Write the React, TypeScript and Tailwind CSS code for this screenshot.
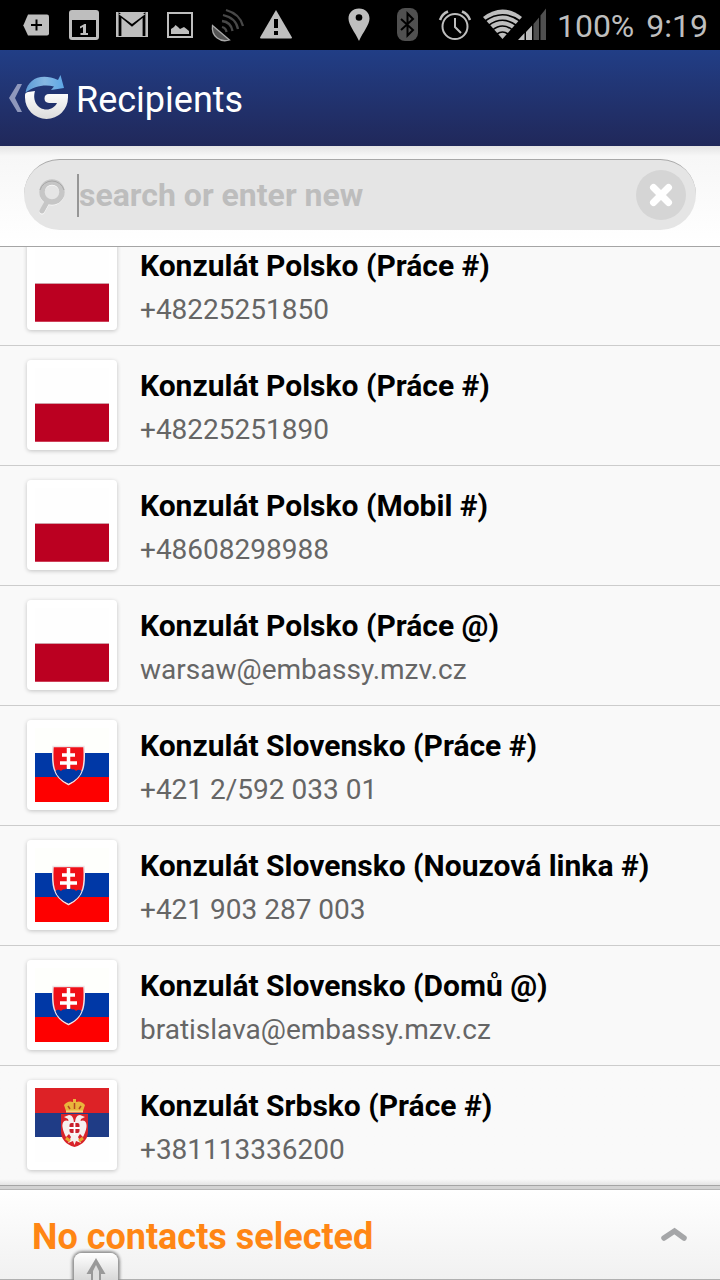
import React from "react";

type Flag = "pl" | "sk" | "rs";

interface Contact {
  name: string;
  detail: string;
  flag: Flag;
}

const contacts: Contact[] = [
  { name: "Konzulát Polsko (Práce #)", detail: "+48225251850", flag: "pl" },
  { name: "Konzulát Polsko (Práce #)", detail: "+48225251890", flag: "pl" },
  { name: "Konzulát Polsko (Mobil #)", detail: "+48608298988", flag: "pl" },
  { name: "Konzulát Polsko (Práce @)", detail: "warsaw@embassy.mzv.cz", flag: "pl" },
  { name: "Konzulát Slovensko (Práce #)", detail: "+421 2/592 033 01", flag: "sk" },
  { name: "Konzulát Slovensko (Nouzová linka #)", detail: "+421 903 287 003", flag: "sk" },
  { name: "Konzulát Slovensko (Domů @)", detail: "bratislava@embassy.mzv.cz", flag: "sk" },
  { name: "Konzulát Srbsko (Práce #)", detail: "+381113336200", flag: "rs" },
];

function Cell({ children }: { children: React.ReactNode }) {
  return <span className="flex w-12 shrink-0 justify-center">{children}</span>;
}

function StatusBar() {
  return (
    <div className="flex h-[50px] shrink-0 items-center justify-between bg-black pl-3 pr-3 text-[#bebebe]">
      <div className="flex items-center">
        <Cell>
          <svg width="48" height="50" viewBox="0 0 48 50">
            <path d="M16 14.500H35Q37 14.500 37 16.500V33.500Q37 35.500 35 35.500H16L11.300 25.500Z" fill="currentColor" />
            <path d="M24.500 19.500V30.500M19 25H30" stroke="#000" strokeWidth="2" />
          </svg>
        </Cell>
        <Cell>
          <svg width="48" height="50" viewBox="0 0 48 50">
            <rect x="9" y="10" width="30" height="30" rx="3" fill="currentColor" />
            <rect x="12" y="20" width="24" height="17" fill="#000" />
            <path d="M20 26.500L24.500 24H26V33H28V35H20.500V33H23V27L20 28.500Z" fill="currentColor" />
          </svg>
        </Cell>
        <Cell>
          <svg width="48" height="50" viewBox="0 0 48 50">
            <rect x="8" y="12" width="32" height="25" fill="currentColor" />
            <path d="M12 36V15L24 25L36 15V36" fill="none" stroke="#000" strokeWidth="2.800" />
            <path d="M10.500 14H37.500L24 24Z" fill="currentColor" />
          </svg>
        </Cell>
        <Cell>
          <svg width="48" height="50" viewBox="0 0 48 50">
            <rect x="12" y="13" width="24" height="24" fill="none" stroke="currentColor" strokeWidth="2" />
            <path d="M15 34V29L18 27L19.500 25L22 27L24 29L28 27L30 28.500L33 31V34Z" fill="currentColor" />
          </svg>
        </Cell>
        <Cell>
          <svg width="48" height="50" viewBox="0 0 48 50" fill="none">
            <path d="M8.500 25.500C7 36 16 43 25.500 40Z" fill="#555" stroke="#aaa" strokeWidth="1.300" />
            <path d="M18 27Q22 28 22.500 32M18 21Q27 22 28.500 31M19 15Q32 18 34 29M22 10Q36 14 39 26" stroke="#484848" strokeWidth="2.300" />
          </svg>
        </Cell>
        <Cell>
          <svg width="48" height="50" viewBox="0 0 48 50">
            <path d="M24 10L40 37.500Q40 38.500 39 38.500H9Q8 38.500 8 37.500Z" fill="currentColor" />
            <path d="M24 19V28M24 31V35" stroke="#000" strokeWidth="4" />
          </svg>
        </Cell>
      </div>
      <div className="flex items-center">
        <Cell>
          <svg width="48" height="50" viewBox="0 0 48 50">
            <path d="M24 8.500C17.500 8.500 13.500 13 13.500 18.500C13.500 25 20 32 24 41C28 32 34.500 25 34.500 18.500C34.500 13 30.500 8.500 24 8.500Z" fill="currentColor" />
            <circle cx="24" cy="17.500" r="3.300" fill="#000" />
          </svg>
        </Cell>
        <Cell>
          <svg width="48" height="50" viewBox="0 0 48 50">
            <rect x="14" y="8" width="21" height="33" rx="8" fill="#505050" />
            <path d="M18 19L30 30L24.500 35.500V13.500L30 19L18 30" fill="none" stroke="#000" strokeWidth="2" />
          </svg>
        </Cell>
        <Cell>
          <svg width="48" height="50" viewBox="0 0 48 50" fill="none" stroke="currentColor">
            <circle cx="24" cy="26.500" r="12.500" strokeWidth="2" />
            <path d="M24 18V27L30 33" strokeWidth="2" />
            <path d="M9 20Q11 14 17 11.500M39 20Q37 14 31 11.500" strokeWidth="2.500" />
          </svg>
        </Cell>
        <span className="mr-[10px] flex w-[68px] shrink-0">
          <svg width="68" height="50" viewBox="0 0 68 50">
            <path d="M4 17Q23.500 2 43 17L23.500 39Z" fill="currentColor" />
            <path d="M6 21Q23.500 8.500 41 21M9.500 25.500Q23.500 15 37.500 25.500M13.500 30Q23.500 22 33.500 30M18 34Q23.500 30 29 34" stroke="#000" strokeWidth="1.600" fill="none" />
            <path d="M39 40L45.500 33V40ZM47 32L53 25.500V40H47Z" fill="currentColor" />
            <path d="M54.500 24L60 17.500V40H54.500ZM61.500 15.500L67 8.500V40H61.500Z" fill="#505050" />
          </svg>
        </span>
        <span className="flex gap-3 whitespace-nowrap pt-[2px] text-[32px] leading-[48px]">
          <span>100%</span>
          <span>9:19</span>
        </span>
      </div>
    </div>
  );
}

function Header() {
  return (
    <header className="flex h-24 shrink-0 items-center bg-gradient-to-b from-[#213e86] to-[#20285a] pl-2 text-white">
      <a href="#back" aria-label="Back" className="flex">
        <svg width="64" height="96" viewBox="8 50 64 96">
          <defs>
            <linearGradient id="g-body" x1="0" y1="0" x2="0" y2="1">
              <stop offset="0" stopColor="#ffffff" />
              <stop offset="1" stopColor="#dcdcdc" />
            </linearGradient>
            <linearGradient id="g-arrow" x1="0" y1="0" x2="1" y2="0">
              <stop offset="0" stopColor="#5c9bd6" />
              <stop offset="0.500" stopColor="#86b7e2" />
              <stop offset="1" stopColor="#5da7e6" />
            </linearGradient>
          </defs>
          <path d="M17.500 84H22L15 98L22 112H17.500L9 98Z" fill="#8f98bc" />
          <path d="M25 95Q25 92.500 28 92L35 91C32 101 38 109.500 46.500 109.500C51 109.500 55 107 57 103H49Q44.500 102.500 44.500 98.500Q44.500 94 49 94H68V97.500A21.500 21.500 0 0 1 25 97.500Z" fill="url(#g-body)" />
          <path d="M25.500 92.500C28 78 42 72.500 58 80L60.500 75L64 88L51 90L54 86.500C45 84 34 86 25.500 92.500Z" fill="url(#g-arrow)" />
        </svg>
      </a>
      <h1 className="ml-1 pt-1 text-[36px] leading-[48px]">Recipients</h1>
    </header>
  );
}

function SearchBar() {
  return (
    <div className="h-[101px] shrink-0 border-b border-[#a5a5a5] bg-gradient-to-b from-[#e4e4e4] via-[#f7f7f7] via-10% to-white px-6 pt-[13px]">
      <div className="flex h-[71px] items-center rounded-full border-t border-[#a8a8a8] bg-[#e5e5e5] pl-[14px] pr-[10px]">
        <svg width="28" height="40" viewBox="0 0 28 40" className="shrink-0" fill="none">
          <path d="M9 28L4 37" stroke="#fafafa" strokeWidth="5" strokeLinecap="round" />
          <circle cx="14" cy="18" r="10" stroke="#fafafa" strokeWidth="5" />
          <path d="M9 27L4 36" stroke="#c6c6c6" strokeWidth="5" strokeLinecap="round" />
          <circle cx="14" cy="17" r="10" stroke="#c6c6c6" strokeWidth="5.500" />
          <path d="M2 15A12.500 12.500 0 0 1 26 15" stroke="#a8a8a8" strokeWidth="1" />
        </svg>
        <span className="ml-[11px] h-[43px] w-[2px] shrink-0 bg-[#969696]" />
        <input
          type="text"
          aria-label="Search recipients"
          placeholder="search or enter new"
          className="h-14 min-w-0 flex-1 bg-transparent text-[32px] font-bold text-black outline-none placeholder:text-[#bdbdbd]"
        />
        <button type="button" aria-label="Clear search" className="flex size-[50px] shrink-0 items-center justify-center rounded-full bg-[#d5d5d5]">
          <svg width="24" height="24" viewBox="0 0 24 24">
            <path d="M4.500 4.500L19.500 19.500M19.500 4.500L4.500 19.500" stroke="#fff" strokeWidth="7" strokeLinecap="round" />
          </svg>
        </button>
      </div>
    </div>
  );
}

function FlagPicture({ flag }: { flag: Flag }) {
  if (flag === "pl") {
    return (
      <svg width="74" height="74" viewBox="0 0 74 74">
        <rect width="74" height="74" fill="#fefefe" />
        <rect y="35" width="74" height="39" fill="#bb0021" />
        <path d="M0 35.500H74" stroke="#cfa0a8" />
        <path d="M0 73.500H74" stroke="#cf4059" />
      </svg>
    );
  }
  if (flag === "sk") {
    return (
      <svg width="74" height="74" viewBox="0 0 74 74">
        <rect width="74" height="25" fill="#fefffc" />
        <rect y="25" width="74" height="25" fill="#0038a6" />
        <rect y="49" width="74" height="25" fill="#fe0000" />
        <path d="M18 18.500H49C50 35 50 49 33.500 56.500C17 49 17 35 18 18.500Z" fill="#f01018" stroke="#eee5e8" strokeWidth="1.500" />
        <path d="M20.500 43Q23 40.500 26 43Q28 40.500 30 41.500Q33.500 38 37 41.500Q39.500 40.500 41 43Q44 40.500 46.500 43Q44 51 33.500 55.500Q23 51 20.500 43Z" fill="#0038a6" />
        <path d="M33.500 20V41M27 27H40M25 35H42" stroke="#fff" strokeWidth="3.500" />
      </svg>
    );
  }
  return (
    <svg width="74" height="74" viewBox="0 0 74 74">
      <rect width="74" height="25" fill="#dd2226" />
      <rect y="25" width="74" height="24" fill="#1f3c86" />
      <rect y="49" width="74" height="25" fill="#fefefe" />
      <path d="M26 26H53V43Q53 55 39.500 59Q26 55 26 43Z" fill="#d8232a" />
      {/* double-headed eagle */}
      <path d="M39 36C39 30 37 27 34 27L29 29L33 31L33.500 33C29 31 27 35 27.500 39C28 43 30 47 31 49L34 46L36 49L33 55L38 53L39.500 57L41 53L46 55L43 49L45 46L48 49C49 47 51 43 51.500 39C52 35 50 31 45.500 33L46 31L50 29L45 27C42 27 40 30 40 36Z" fill="#f6f0ef" />
      <rect x="34.500" y="35" width="10" height="10" rx="2" fill="#c9202b" />
      <path d="M39.500 34V47M34 40H45" stroke="#fff" strokeWidth="1.800" />
      <path d="M31 50L35 53M48 50L44 53" stroke="#e4a52c" strokeWidth="3" />
      <path d="M31 23L29 17Q33 12 38 14V11H41V14Q46 12 50 17L48 23Z" fill="#e9b53c" />
      <path d="M33 18L35 21M39.500 15V21M46 18L44 21" stroke="#b4451f" strokeWidth="1.500" />
      <path d="M31 23.500H48" stroke="#f3d880" strokeWidth="2" />
    </svg>
  );
}

function ContactRow({ contact }: { contact: Contact }) {
  return (
    <li className="group shrink-0">
      <button
        type="button"
        className="flex h-[120px] w-full items-start border-b border-[#cccccc] pl-[27px] pr-4 pt-[14px] text-left group-last:border-[#a4a4a4] group-last:bg-gradient-to-b group-last:from-[#f9f9f9] group-last:from-95% group-last:to-[#e4e4e4]"
      >
        <span className="flex size-[90px] shrink-0 items-center justify-center rounded bg-white shadow-[0_1px_4px_rgba(0,0,0,0.22)]">
          <FlagPicture flag={contact.flag} />
        </span>
        <span className="ml-[23px] flex min-w-0 flex-col whitespace-nowrap pt-[4px]">
          <span className="text-[30px] font-bold leading-[44px] text-black">{contact.name}</span>
          <span className="text-[28px] leading-[44px] text-[#666666]">{contact.detail}</span>
        </span>
      </button>
    </li>
  );
}

function Footer() {
  return (
    <footer className="relative h-[94px] shrink-0 bg-[#d2d2d2] pt-[3px]">
      <div className="flex h-full items-center justify-between border-b border-t border-b-[#b0b0b0] border-t-[#b4b4b4] bg-gradient-to-b from-white to-[#f1f1f1] pl-8 pr-8">
        <p className="pt-1 text-[36px] font-bold leading-[48px] text-[#ff8614]">No contacts selected</p>
        <button type="button" aria-label="Show selected contacts" className="flex">
          <svg width="28" height="16" viewBox="0 0 28 16">
            <path d="M4 11L14.500 4L24 11" fill="none" stroke="#a5a6a8" strokeWidth="5.500" strokeLinecap="round" />
          </svg>
        </button>
      </div>
      <span className="absolute bottom-0 left-[74px] flex h-[27px] w-11 justify-center overflow-hidden rounded-t-lg bg-gradient-to-b from-white to-[#d8d8d8] shadow-[0_0_3px_2px_#8e8e8e]">
        <svg width="24" height="27" viewBox="0 0 24 27">
          <path d="M12 5L21.500 21H17V30H7V21H2.500Z" fill="#999999" />
          <path d="M12 12L15 18V30H9V18Z" fill="#dedede" />
        </svg>
      </span>
    </footer>
  );
}

export default function App() {
  return (
    <div className="flex h-screen flex-col overflow-hidden bg-[#f9f9f9] font-[Roboto,sans-serif]">
      <StatusBar />
      <Header />
      <SearchBar />
      <main className="flex min-h-0 flex-1 flex-col justify-end overflow-hidden">
        <ul className="flex flex-col">
          {contacts.map((contact) => (
            <ContactRow key={contact.detail} contact={contact} />
          ))}
        </ul>
      </main>
      <Footer />
    </div>
  );
}
